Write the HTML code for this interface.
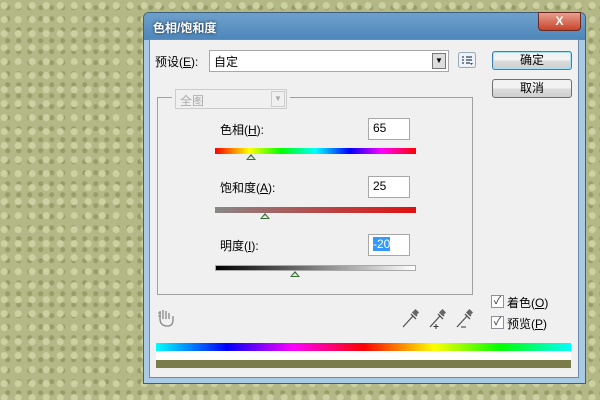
<!DOCTYPE html>
<html><head><meta charset="utf-8"><style>
*{margin:0;padding:0;box-sizing:border-box}
body{width:600px;height:400px;overflow:hidden;position:relative;font-family:"Liberation Sans","Noto Sans CJK SC",sans-serif;font-size:12px;color:#000;
background:#b3b886;
background-image:radial-gradient(circle at 30% 40%,#cdd0a2 0 3px,transparent 4px),radial-gradient(circle at 70% 70%,#979d68 0 2px,transparent 3px);
background-size:14px 14px,11px 11px}
.a{position:absolute}
.win{left:143px;top:12px;width:443px;height:372px;background:#a9cbe6;border:1px solid #3c5f80;border-radius:6px 6px 0 0}
.title{left:0;top:0;width:441px;height:27px;background:linear-gradient(#6fa0cc,#4d86ba);border-radius:5px 5px 0 0;color:#fff;font-weight:bold;font-size:12px;padding:6px 0 0 9px;text-shadow:0 0 3px #123}
.close{left:394px;top:-1px;width:43px;height:19px;background:linear-gradient(#e8a090,#c8442c);border:1px solid #6b2a20;border-radius:0 0 4px 4px;color:#fff;font-weight:bold;text-align:center;font-size:12px;line-height:17px}
.inp{background:#fff;border:1px solid #a8a8a8;padding:2px 4px}
.btn{border:1px solid #707070;border-radius:3px;background:linear-gradient(#f2f2f2 50%,#dcdcdc 50%,#cfcfcf);text-align:center;line-height:16px}
.thumb{width:0;height:0;border-left:5px solid transparent;border-right:5px solid transparent;border-bottom:6px solid #3a6a3a}
.thumb::after{content:"";position:absolute;left:-3px;top:2px;border-left:3px solid transparent;border-right:3px solid transparent;border-bottom:3px solid #e0f0e0}
.cb{width:13px;height:13px;border:1px solid #8f8f9f;background:#fff;font-size:11px;line-height:11px;text-align:center;color:#334}
u{text-decoration:underline}
</style></head><body>
<div class="a win">
 <div class="a title">色相/饱和度</div>
 <div class="a close">X</div>
</div>
<div class="a" style="left:149px;top:39px;width:430px;height:339px;background:#f0f0f0;border:1px solid #6d8aa6"></div>

<div class="a" style="left:155px;top:53px">预设(<u>E</u>):</div>
<div class="a inp" style="left:209px;top:50px;width:240px;height:22px">自定</div>
<div class="a" style="left:432px;top:53px;width:14px;height:16px;border:1px solid #777;background:#ddd;font-size:8px;text-align:center;line-height:14px">▼</div>
<svg class="a" style="left:458px;top:52px" width="18" height="16"><rect x="0.5" y="0.5" width="17" height="15" rx="2" fill="#eef2f8" stroke="#9ab"/><path d="M4 5h2M8 5h6M4 8h2M8 8h6M4 11h2M8 11h4" stroke="#345" stroke-width="1.2"/><path d="M12 11l3 0-1.5 2z" fill="#345"/></svg>
<div class="a btn" style="left:492px;top:51px;width:80px;height:19px;border-color:#3c7fb1;box-shadow:inset 0 0 0 1px #a6e0f7">确定</div>
<div class="a btn" style="left:492px;top:79px;width:80px;height:19px">取消</div>

<div class="a" style="left:157px;top:97px;width:316px;height:198px;border:1px solid #a0a0a0"></div>
<div class="a" style="left:172px;top:89px;width:118px;height:20px;background:#f0f0f0"></div>
<div class="a" style="left:175px;top:89px;width:112px;height:20px;border:1px solid #ccc;background:#f0f0f0;color:#aaa;padding:2px 4px">全图</div>
<div class="a" style="left:271px;top:91px;width:14px;height:16px;border:1px solid #ccc;color:#aaa;font-size:8px;text-align:center;line-height:14px">▼</div>

<div class="a" style="left:220px;top:121px">色相(<u>H</u>):</div>
<div class="a inp" style="left:368px;top:118px;width:42px;height:22px">65</div>
<div class="a" style="left:215px;top:148px;width:201px;height:6px;background:linear-gradient(90deg,#f00,#ff0 17%,#0f0 33%,#0ff 50%,#00f 67%,#f0f 83%,#f00)"></div>
<div class="a thumb" style="left:246px;top:154px"></div>

<div class="a" style="left:220px;top:179px">饱和度(<u>A</u>):</div>
<div class="a inp" style="left:368px;top:176px;width:42px;height:22px">25</div>
<div class="a" style="left:215px;top:207px;width:201px;height:6px;background:linear-gradient(90deg,#888,#e01010)"></div>
<div class="a thumb" style="left:260px;top:213px"></div>

<div class="a" style="left:220px;top:237px">明度(<u>I</u>):</div>
<div class="a inp" style="left:368px;top:234px;width:42px;height:22px"><span style="background:#3399ff;color:#fff">-20</span></div>
<div class="a" style="left:215px;top:265px;width:201px;height:6px;background:linear-gradient(90deg,#000,#fff);border:1px solid #aaa"></div>
<div class="a thumb" style="left:290px;top:271px"></div>

<svg class="a" style="left:157px;top:308px" width="20" height="20"><path d="M3 3v8M6 2v9M9 3v8M12 5v6M3 11q0 6 6 7h3q4-1 4-6v-4" fill="none" stroke="#888" stroke-width="1.3"/><path d="M1 5h3M1 8h3" stroke="#888"/></svg>
<svg class="a" style="left:400px;top:308px" width="80" height="22">
 <g fill="none" stroke="#555" stroke-width="1.3">
  <path d="M3 19L13 8M11 6l5 5M13 4l4 4"/><path d="M30 19L40 8M38 6l5 5M40 4l4 4"/><path d="M57 19L67 8M65 6l5 5M67 4l4 4"/>
 </g>
 <g fill="#666"><rect x="13" y="2" width="5" height="5" transform="rotate(45 15.5 4.5)"/><rect x="40" y="2" width="5" height="5" transform="rotate(45 42.5 4.5)"/><rect x="67" y="2" width="5" height="5" transform="rotate(45 69.5 4.5)"/></g>
 <path d="M36 16v5M33.5 18.5h5M61 19h5" stroke="#333"/>
</svg>

<div class="a cb" style="left:491px;top:295px">✓</div>
<div class="a" style="left:507px;top:294px">着色(<u>O</u>)</div>
<div class="a cb" style="left:491px;top:316px">✓</div>
<div class="a" style="left:507px;top:315px">预览(<u>P</u>)</div>

<div class="a" style="left:156px;top:343px;width:415px;height:8px;background:linear-gradient(90deg,#0ff,#00f 17%,#f0f 33%,#f00 50%,#ff0 67%,#0f0 83%,#0ff)"></div>
<div class="a" style="left:156px;top:351px;width:415px;height:9px;background:#fff"></div>
<div class="a" style="left:156px;top:360px;width:415px;height:8px;background:#7a7c4a"></div>
</body></html>
